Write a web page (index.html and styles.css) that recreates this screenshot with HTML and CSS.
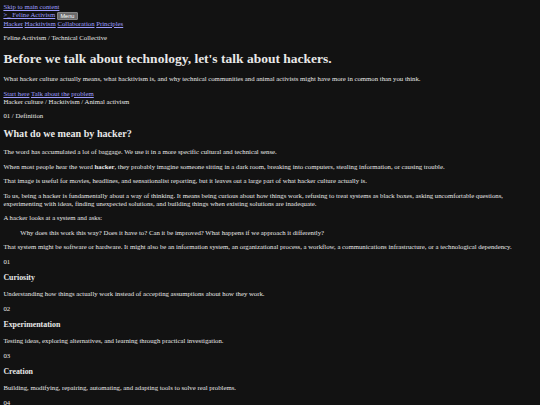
FILE: index.html
```html
<!DOCTYPE html>
<html lang="en">
<head>
<meta charset="utf-8">
<title>Feline Activism</title>
<link rel="stylesheet" href="styles.css">
</head>
<body>
<a class="skip" href="#main">Skip to main content</a>
<header class="site-header">
  <div class="brand-row"><a class="brand" href="#">&gt;_ Feline Activism</a> <button class="menu-btn" type="button">Menu</button></div>
  <nav class="nav"><a href="#">Hacker</a> <a href="#">Hacktivism</a> <a href="#">Collaboration</a> <a href="#">Principles</a></nav>
</header>
<main id="main">
  <section class="hero">
    <p class="eyebrow">Feline Activism / Technical Collective</p>
    <h1>Before we talk about technology, let's talk about hackers.</h1>
    <p>What hacker culture actually means, what hacktivism is, and why technical communities and animal activists might have more in common than you think.</p>
    <div class="cta"><a href="#">Start here</a> <a href="#">Talk about the problem</a></div>
    <div class="tags">Hacker culture / Hacktivism / Animal activism</div>
  </section>
  <section class="definition">
    <p class="eyebrow">01 / Definition</p>
    <h2>What do we mean by hacker?</h2>
    <p>The word has accumulated a lot of baggage. We use it in a more specific cultural and technical sense.</p>
    <p>When most people hear the word <strong>hacker</strong>, they probably imagine someone sitting in a dark room, breaking into computers, stealing information, or causing trouble.</p>
    <p>That image is useful for movies, headlines, and sensationalist reporting, but it leaves out a large part of what hacker culture actually is.</p>
    <p>To us, being a hacker is fundamentally about a way of thinking. It means being curious about how things work, refusing to treat systems as black boxes, asking uncomfortable questions, experimenting with ideas, finding unexpected solutions, and building things when existing solutions are inadequate.</p>
    <p>A hacker looks at a system and asks:</p>
    <blockquote>Why does this work this way? Does it have to? Can it be improved? What happens if we approach it differently?</blockquote>
    <p>That system might be software or hardware. It might also be an information system, an organizational process, a workflow, a communications infrastructure, or a technological dependency.</p>
    <div class="traits">
      <article class="trait"><p class="num">01</p><h3>Curiosity</h3><p>Understanding how things actually work instead of accepting assumptions about how they work.</p></article>
      <article class="trait"><p class="num">02</p><h3>Experimentation</h3><p>Testing ideas, exploring alternatives, and learning through practical investigation.</p></article>
      <article class="trait"><p class="num">03</p><h3>Creation</h3><p>Building, modifying, repairing, automating, and adapting tools to solve real problems.</p></article>
      <article class="trait"><p class="num">04</p><h3>Collaboration</h3><p>Sharing knowledge, documenting what we learn, and building on each other's work.</p></article>
    </div>
  </section>
</main>
</body>
</html>
```
FILE: styles.css
```css
html {
  background: #121212;
}
body {
  margin: 3.4px;
  font-family: "Liberation Serif", "DejaVu Serif", serif;
  font-size: 6.75px;
  line-height: 1.15;
  color: #e8e8e8;
  background: #121212;
}
a {
  color: #9e9eff;
}
.menu-btn {
  font-family: "Liberation Sans", Arial, sans-serif;
  font-size: 5.6px;
  line-height: 6px;
  color: #fff;
  background: #6b6b6b;
  border: 1px solid #858585;
  border-radius: 1px;
  padding: 0 2.5px;
  margin: 0;
  vertical-align: middle;
}
p {
  margin: 1em 0;
}
h1 {
  font-size: 2em;
  margin: 0.67em 0;
}
h2 {
  font-size: 1.5em;
  margin: 0.83em 0;
}
h3 {
  font-size: 1.17em;
  margin: 1em 0;
}
blockquote {
  margin: 1em 16.9px;
}
```
